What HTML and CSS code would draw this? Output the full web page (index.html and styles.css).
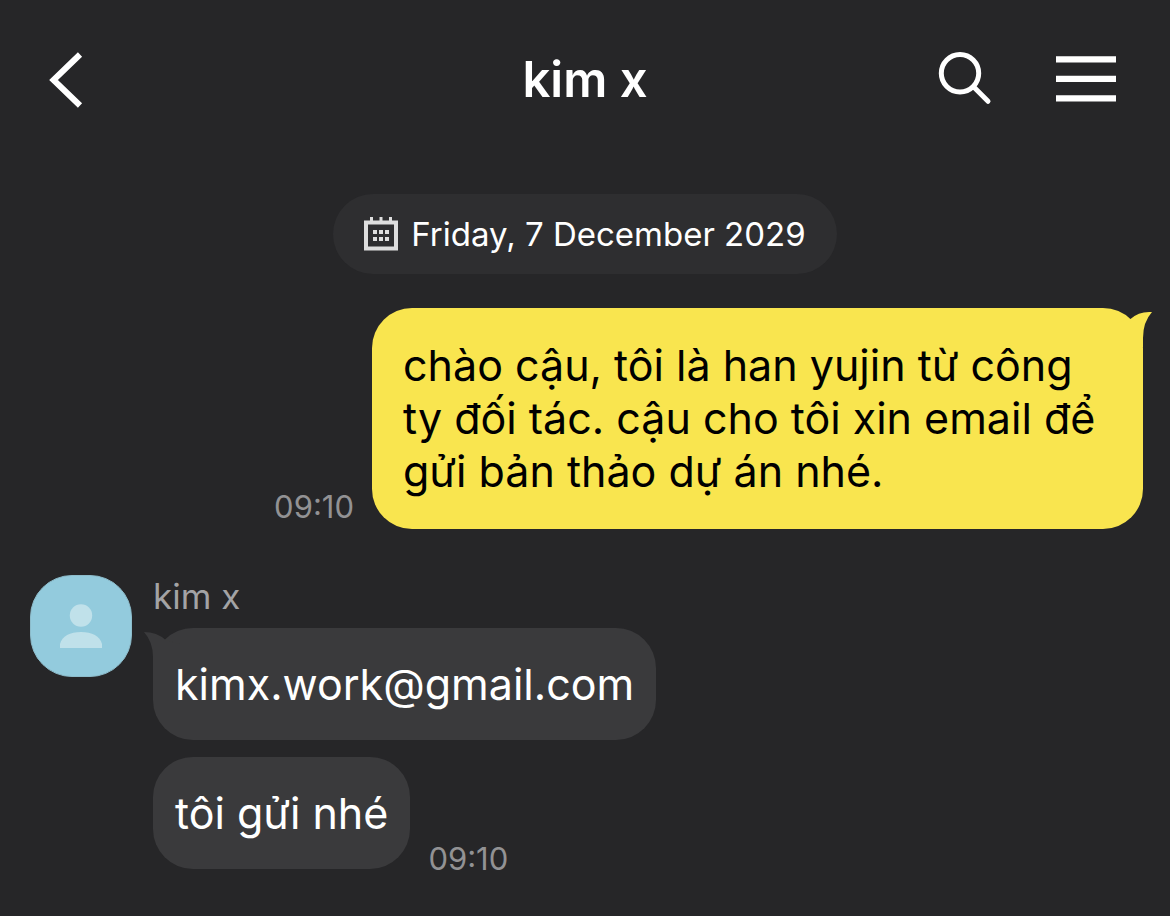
FILE: index.html
```
<!DOCTYPE html>
<html lang="vi">
<head>
    <meta charset="UTF-8">
    <meta name="viewport" content="width=device-width, initial-scale=1.0">
    <title>kim x</title>
    <link rel="stylesheet" href="styles.css">
</head>
<body>
    <header class="header">
        <button type="button" class="icon-button" aria-label="Back">
            <svg width="36" height="56" viewBox="0 0 36 56" fill="none" stroke="#fff" stroke-width="6">
                <path d="M32 2.500 L5.500 28 L32 53.500"/>
            </svg>
        </button>
        <h1 class="title">kim x</h1>
        <div class="actions">
            <button type="button" class="icon-button" aria-label="Search">
                <svg width="54" height="56" viewBox="0 0 54 56" fill="none" stroke="#fff" stroke-width="5">
                    <circle cx="22" cy="21.300" r="18.700"/>
                    <path d="M35.500 34.800 L50 49.300" stroke-linecap="round"/>
                </svg>
            </button>
            <button type="button" class="icon-button" aria-label="Menu">
                <svg width="60" height="48" viewBox="0 0 60 48" fill="#fff">
                    <path d="M0 .300h60v6.200H0zM0 19.800h60v6.200H0zM0 39.300h60v6.200H0z"/>
                </svg>
            </button>
        </div>
    </header>

    <main class="chat">
        <button type="button" class="date">
            <svg width="34" height="34" viewBox="0 0 34 34" fill="#dedede">
                <path fill-rule="evenodd" d="M0 3.500h34v30H0zM4 7.500v22h26v-22z"/>
                <path d="M6 0h3v5H6zM15.500 0h3v5h-3zM25 0h3v5h-3z"/>
                <path d="M9 13h4v4H9zM15 13h4v4h-4zM21 13h4v4h-4zM9 20h4v4H9zM15 20h4v4h-4zM21 20h4v4h-4z"/>
            </svg>
            <span>Friday, 7 December 2029</span>
        </button>

        <div class="message sent">
            <time class="time">09:10</time>
            <p class="bubble">
                chào cậu, tôi là han yujin từ công ty đối tác. cậu cho tôi xin email để gửi bản thảo dự án nhé.
                <svg class="tail" width="36" height="36" viewBox="0 0 36 36" fill="#f9e54f">
                    <path d="M0 12 L14.500 8 Q23 0 36 1 Q27 11 27 27 V36 H0 Z"/>
                </svg>
            </p>
        </div>

        <div class="received">
            <div class="avatar">
                <svg width="42" height="44" viewBox="0 0 42 44" fill="#c0e1ea">
                    <circle cx="21" cy="11.500" r="11.200"/>
                    <path d="M0 44 V40 C2 32 10 28 21 28 S40 32 42 40 V44 Z"/>
                </svg>
            </div>
            <div class="thread">
                <h2 class="name">kim x</h2>
                <div class="message">
                    <p class="bubble">
                        kimx.work@gmail.com
                        <svg class="tail" width="36" height="36" viewBox="0 0 36 36" fill="#3a3a3c">
                            <path d="M36 12 L21.500 8 Q13 0 0 0 Q9 10 9 25 V36 H36 Z"/>
                        </svg>
                    </p>
                </div>
                <div class="message">
                    <p class="bubble">tôi gửi nhé</p>
                    <time class="time">09:10</time>
                </div>
            </div>
        </div>
    </main>
</body>
</html>
```

FILE: styles.css
```
* {
    box-sizing: border-box;
    margin: 0;
    padding: 0;
}

body {
    font-family: Inter, "Noto Sans", sans-serif;
    color: #fff;
    background-color: #262628;
}

button {
    font: inherit;
    color: inherit;
    border: none;
    background: none;
    cursor: pointer;
}

svg {
    display: block;
}

.header {
    display: grid;
    grid-template-columns: 1fr auto 1fr;
    align-items: center;
    height: 160px;
    padding: 0 48px;
}

.icon-button {
    justify-self: start;
}

.title {
    font-size: 49px;
    font-weight: 600;
    line-height: 60px;
}

.actions {
    display: flex;
    align-items: center;
    justify-content: flex-end;
    gap: 64px;
    padding-right: 6px;
}

.chat {
    display: flex;
    flex-direction: column;
    padding: 34px 0 46px;
}

.date {
    display: flex;
    align-items: center;
    align-self: center;
    gap: 13px;
    height: 80px;
    padding: 0 31px;
    border-radius: 40px;
    background-color: #2e2e30;
    font-size: 33px;
}

.message {
    display: flex;
    align-items: flex-end;
    gap: 18px;
}

.sent {
    justify-content: flex-end;
    margin-top: 34px;
    padding: 0 27px;
}

.bubble {
    position: relative;
    padding: 30px 22px;
    border-radius: 40px;
    background-color: #3a3a3c;
    font-size: 43px;
    line-height: 52px;
}

.sent .bubble {
    max-width: 771px;
    padding: 31px;
    background-color: #f9e54f;
    color: #000;
    line-height: 53px;
}

.tail {
    position: absolute;
    top: 4px;
    left: -9px;
}

.sent .tail {
    top: 3px;
    right: -9px;
    left: auto;
}

.time {
    color: #929294;
    font-size: 31px;
    line-height: 20px;
}

.sent .time {
    padding-bottom: 12px;
}

.received {
    display: flex;
    align-items: flex-start;
    gap: 21px;
    margin-top: 46px;
    padding: 0 30px;
}

.avatar {
    display: flex;
    flex-shrink: 0;
    align-items: center;
    justify-content: center;
    width: 102px;
    height: 102px;
    border: 1px solid #8dbccb;
    border-radius: 42px;
    background-color: #93cbdd;
}

.thread {
    display: flex;
    flex-direction: column;
    gap: 17px;
}

.name {
    margin-bottom: -6px;
    color: #a3a3a5;
    font-size: 35px;
    font-weight: 400;
    line-height: 42px;
}
```
